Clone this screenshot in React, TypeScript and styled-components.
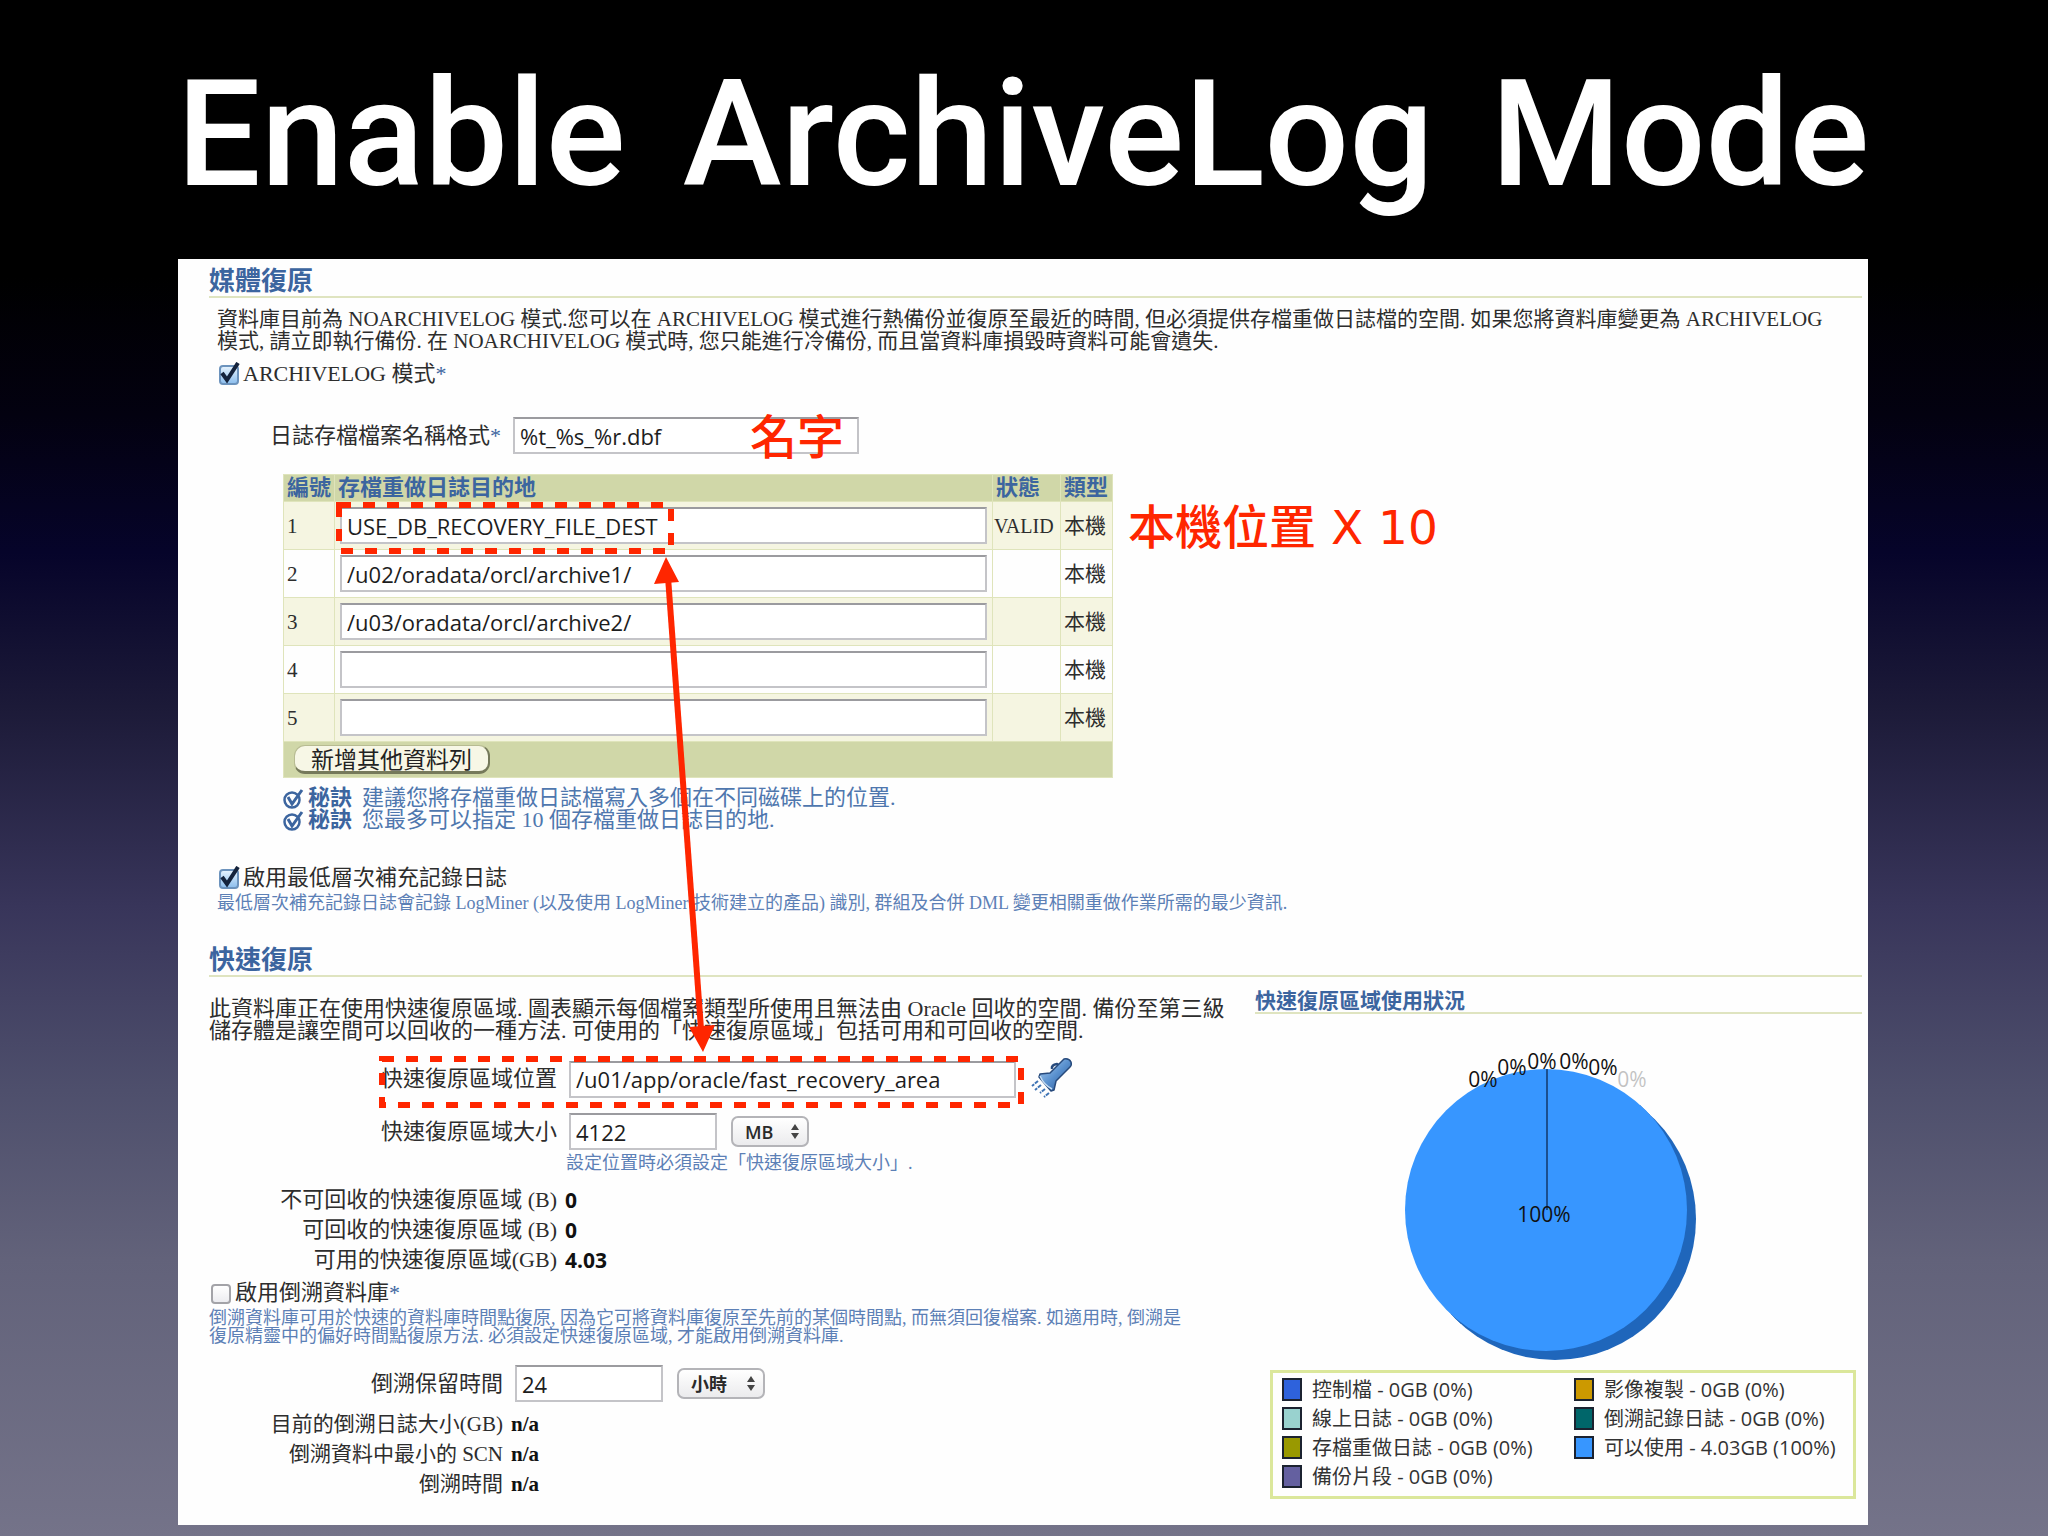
import React from "react";
import styled, { createGlobalStyle } from "styled-components";

const serif = `"Liberation Serif", "Noto Sans CJK TC", serif`;
const sans = `"Open Sans", "Noto Sans CJK TC", sans-serif`;
const display = `Roboto, "Noto Sans CJK TC", sans-serif`;
const red = "#ff2600";
const navy = "#3c659f";
const rule = "#dfe4c0";

const GlobalStyle = createGlobalStyle`
  *, *::before, *::after { box-sizing: border-box; }
  body { margin: 0; background: #000; }
`;

const Slide = styled.main`
  min-height: 100vh;
  padding: 0 180px 10px 178px;
  background: linear-gradient(
    #000 0%, #000 18%, #030110 27%, #06042a 36%, #1c1a38 46%,
    #38355a 59%, #4e4f6c 71%, #62627a 82%, #747389 100%
  );
`;

const Title = styled.h1`
  display: flex;
  justify-content: center;
  gap: 20px;
  margin: 0;
  padding: 44px 0 35px;
  font: 500 149px/180px ${display};
  color: #fff;
  white-space: pre;
`;

const Panel = styled.section`
  position: relative;
  padding: 9px 6px 26px 31px;
  background: #fefefe;
  font: 22px/22px ${serif};
  color: #2d2d2d;
`;

const Heading = styled.h2`
  margin: 0;
  border-bottom: 2px solid ${rule};
  font: bold 26px/28px ${serif};
  color: ${navy};
`;

const Media = styled.div`
  padding: 10px 0 35px 8px;
`;

const Intro = styled.p<{ $size: number }>`
  margin: 0;
  font-size: ${(p) => p.$size}px;
  white-space: nowrap;
`;

const CheckRow = styled.label<{ $top: number }>`
  display: flex;
  align-items: center;
  gap: 3px;
  height: 24px;
  margin-top: ${(p) => p.$top}px;
`;

const CheckBox = styled.span`
  position: relative;
  display: block;
  width: 23px;
  height: 24px;

  input {
    appearance: none;
    display: block;
    width: 20px;
    height: 20px;
    margin: 3px 0 0 2px;
    border: 2px solid #a3a3a8;
    border-radius: 4px;
    background: linear-gradient(#fff, #ececf0);
  }
  input:checked {
    border-color: #6c93bd;
    background: linear-gradient(#e3f1fd, #8fc0ee);
  }
  svg {
    position: absolute;
    inset: 0;
    pointer-events: none;
  }
  input:not(:checked) + svg { display: none; }
`;

const Star = styled.span`
  color: ${navy};
`;

const Field = styled.div<{ $label: number; $top: number }>`
  display: grid;
  grid-template-columns: ${(p) => p.$label}px auto auto;
  justify-content: start;
  align-items: center;
  column-gap: 12px;
  margin-top: ${(p) => p.$top}px;

  label { text-align: right; }
`;

const TextBox = styled.input<{ $width: string }>`
  width: ${(p) => p.$width};
  height: 37px;
  padding: 0 5px;
  border: 2px solid #c4c4c8;
  border-top-color: #9b9b9f;
  border-radius: 0;
  background: #fff;
  font: 22px/30px ${sans};
  color: #1d1d1d;
  outline: none;
`;

const SelectBox = styled.span<{ $width: number }>`
  position: relative;
  display: block;
  width: ${(p) => p.$width}px;
  margin-left: 2px;

  select {
    appearance: none;
    display: block;
    width: 100%;
    height: 31px;
    padding: 0 12px;
    border: 2px solid #b4b4b8;
    border-radius: 7px;
    background: linear-gradient(#fff, #ebebed);
    font: 600 18px/26px ${sans};
    color: #2a2a2a;
  }
  svg {
    position: absolute;
    top: 8px;
    right: 10px;
    pointer-events: none;
  }
`;

const Table = styled.table`
  width: 829px;
  margin: 20px 0 0 66px;
  border-collapse: collapse;
  table-layout: fixed;

  th, td {
    padding: 0 3px;
    border: 1px solid #dfe4bb;
    text-align: left;
    white-space: nowrap;
  }
  thead th, tfoot td {
    background: #d0d7a8;
  }
  thead th {
    height: 27px;
    font-size: 22px;
    color: ${navy};
  }
  tbody td, tbody th {
    height: 48px;
    font-size: 21px;
    font-weight: normal;
  }
  tbody tr:nth-child(odd) { background: #f5f5e1; }
  tbody td:nth-child(2) { padding: 0 5px; }
  tbody td:nth-child(3) { font-size: 20px; padding: 0 1px; }
  tfoot td {
    height: 36px;
    padding: 0 10px;
  }
`;

const AddButton = styled.button`
  display: block;
  height: 29px;
  padding: 0 16px;
  border: 1px solid #b7bb92;
  border-bottom: 3px solid #75795a;
  border-right: 2px solid #75795a;
  border-radius: 11px;
  background: #f7f7e6;
  font: 23px/24px ${sans};
  color: #222;
`;

const Tips = styled.ul`
  margin: 9px 0 0 66px;
  padding: 0;
  list-style: none;
  color: #4f77ae;

  li {
    display: flex;
    align-items: center;
    gap: 4px;
  }
  strong {
    margin-right: 6px;
    color: ${navy};
  }
`;

const Hint = styled.p<{ $top: number; $left?: number }>`
  margin: ${(p) => p.$top}px 0 0 ${(p) => p.$left ?? 0}px;
  font-size: 18px;
  line-height: 18px;
  color: #5c80b6;
  white-space: nowrap;
`;

const Columns = styled.div`
  display: grid;
  grid-template-columns: minmax(0, 1fr) 607px;
  column-gap: 47px;
`;

const Recovery = styled.div`
  padding-top: 21px;
`;

const Facts = styled.dl<{ $label: number; $top: number; $size: number; $font: string }>`
  display: grid;
  grid-template-columns: ${(p) => p.$label}px 1fr;
  column-gap: 8px;
  margin: ${(p) => p.$top}px 0 0;
  font-size: ${(p) => p.$size}px;
  line-height: 30px;

  dt { text-align: right; }
  dd {
    margin: 0;
    font-family: ${(p) => p.$font};
    font-weight: bold;
    font-size: 21px;
    color: #111;
  }
`;

const Torch = styled.button`
  display: block;
  padding: 0 0 0 3px;
  border: 0;
  background: none;
`;

const Usage = styled.div`
  padding-top: 13px;
`;

const UsageHeading = styled.h3`
  margin: 0;
  border-bottom: 2px solid ${rule};
  font: bold 21px/22px ${serif};
  color: ${navy};
`;

const Pie = styled.svg`
  display: block;
  width: 100%;
  height: 356px;

  text {
    font: 21px ${sans};
    text-anchor: middle;
    fill: #111;
  }
`;

const Legend = styled.ul`
  display: grid;
  grid-template-columns: 292px 1fr;
  grid-template-rows: repeat(4, 29px);
  grid-auto-flow: column;
  margin: 0 6px 0 15px;
  padding: 2px 0 5px 9px;
  border: 3px solid #dbe79b;
  list-style: none;
  font: 20px/29px ${sans};
  color: #333;
  white-space: nowrap;

  li {
    display: flex;
    align-items: center;
    gap: 10px;
  }
`;

const Swatch = styled.span<{ $color: string }>`
  width: 20px;
  height: 23px;
  border: 2px solid #1b2230;
  background: ${(p) => p.$color};
`;

const Note = styled.p<{ $x: number; $y: number }>`
  position: absolute;
  left: ${(p) => p.$x}px;
  top: ${(p) => p.$y}px;
  margin: 0;
  font: 500 47px/56px "Noto Sans CJK TC", sans-serif;
  color: ${red};
  white-space: nowrap;

  span { font-family: "DejaVu Sans", sans-serif; }
`;

const Marks = styled.svg`
  position: absolute;
  left: 0;
  top: 0;
  pointer-events: none;
`;

function Check({ defaultChecked = false }: { defaultChecked?: boolean }) {
  return (
    <CheckBox>
      <input type="checkbox" defaultChecked={defaultChecked} />
      <svg width="23" height="24" viewBox="0 0 23 24" aria-hidden="true">
        <path d="M5 11 L10 18 L21 1" fill="none" stroke="#14233c" strokeWidth="4" />
      </svg>
    </CheckBox>
  );
}

function UnitSelect({ label, unit, width }: { label: string; unit: string; width: number }) {
  return (
    <SelectBox $width={width}>
      <select aria-label={label} defaultValue={unit}>
        <option>{unit}</option>
      </select>
      <svg width="8" height="15" viewBox="0 0 8 15" aria-hidden="true">
        <path d="M0 6 L4 0 L8 6 Z M0 9 L4 15 L8 9 Z" fill="#444" />
      </svg>
    </SelectBox>
  );
}

function TipIcon() {
  return (
    <svg width="21" height="21" viewBox="0 0 21 21" fill="none" stroke={navy} aria-hidden="true">
      <circle cx="9" cy="12" r="7.5" strokeWidth="2.5" />
      <path d="M5 9 L9 16 L19 2" strokeWidth="3" />
    </svg>
  );
}

function TorchIcon() {
  return (
    <svg width="42" height="41" viewBox="0 0 42 41" aria-hidden="true">
      <defs>
        <linearGradient id="torch" x1="0" y1="0" x2="1" y2="1">
          <stop offset="0" stopColor="#b5d5f4" />
          <stop offset="0.5" stopColor="#5a91cf" />
          <stop offset="1" stopColor="#1f4f8f" />
        </linearGradient>
      </defs>
      <path d="M21 12 Q20 8 26 7 L29 9" fill="none" stroke="#274a7c" strokeWidth="2.5" />
      <path
        d="M33 2 Q38 1 40 5 Q41 8 39 10 L25 24 L23 33 L20 34 L8 20 L9 17 L19 16 Z"
        fill="url(#torch)" stroke="#274a7c" strokeWidth="1.5" strokeLinejoin="round"
      />
      <path d="M9 19 Q13 28 21 32" fill="none" stroke="#c7dff6" strokeWidth="1.5" />
      <path
        d="M7 24 L1 29 M10 28 L4 33 M14 32 L9 36 M18 36 L13 40"
        stroke="#3f74b5" strokeWidth="2" strokeDasharray="4 1"
      />
    </svg>
  );
}

const destinations = [
  { path: "USE_DB_RECOVERY_FILE_DEST", status: "VALID" },
  { path: "/u02/oradata/orcl/archive1/", status: "" },
  { path: "/u03/oradata/orcl/archive2/", status: "" },
  { path: "", status: "" },
  { path: "", status: "" },
];

const legend = [
  ["#2e62dc", "控制檔 - 0GB (0%)"],
  ["#99d2cf", "線上日誌 - 0GB (0%)"],
  ["#999900", "存檔重做日誌 - 0GB (0%)"],
  ["#6460a0", "備份片段 - 0GB (0%)"],
  ["#cc9900", "影像複製 - 0GB (0%)"],
  ["#00666a", "倒溯記錄日誌 - 0GB (0%)"],
  ["#3796ff", "可以使用 - 4.03GB (100%)"],
];

const zeroLabels = [
  [228, 73], [257, 61], [287, 55], [319, 55], [348, 61],
];

export default function App() {
  return (
    <Slide>
      <GlobalStyle />
      <Title>
        <span>Enable </span>
        <span>ArchiveLog </span>
        <span>Mode</span>
      </Title>
      <Panel>
        <Heading>媒體復原</Heading>
        <Media>
          <Intro $size={21}>
            資料庫目前為 NOARCHIVELOG 模式.您可以在 ARCHIVELOG 模式進行熱備份並復原至最近的時間, 但必須提供存檔重做日誌檔的空間. 如果您將資料庫變更為 ARCHIVELOG
            <br />
            模式, 請立即執行備份. 在 NOARCHIVELOG 模式時, 您只能進行冷備份, 而且當資料庫損毀時資料可能會遺失.
          </Intro>
          <CheckRow $top={10}>
            <Check defaultChecked />
            <span>ARCHIVELOG 模式<Star>*</Star></span>
          </CheckRow>
          <Field $label={284} $top={31}>
            <label htmlFor="format">日誌存檔檔案名稱格式<Star>*</Star></label>
            <TextBox id="format" $width="346px" defaultValue="%t_%s_%r.dbf" />
          </Field>
          <Table>
            <colgroup>
              <col width="51" />
              <col width="658" />
              <col width="68" />
              <col width="52" />
            </colgroup>
            <thead>
              <tr>
                <th>編號</th>
                <th>存檔重做日誌目的地</th>
                <th>狀態</th>
                <th>類型</th>
              </tr>
            </thead>
            <tbody>
              {destinations.map((row, i) => (
                <tr key={i}>
                  <th scope="row">{i + 1}</th>
                  <td>
                    <TextBox $width="100%" defaultValue={row.path} aria-label={`存檔重做日誌目的地 ${i + 1}`} />
                  </td>
                  <td>{row.status}</td>
                  <td>本機</td>
                </tr>
              ))}
            </tbody>
            <tfoot>
              <tr>
                <td colSpan={4}><AddButton type="button">新增其他資料列</AddButton></td>
              </tr>
            </tfoot>
          </Table>
          <Tips>
            <li><TipIcon /><strong>秘訣</strong>建議您將存檔重做日誌檔寫入多個在不同磁碟上的位置.</li>
            <li><TipIcon /><strong>秘訣</strong>您最多可以指定 10 個存檔重做日誌目的地.</li>
          </Tips>
          <CheckRow $top={35}>
            <Check defaultChecked />
            <span>啟用最低層次補充記錄日誌</span>
          </CheckRow>
          <Hint $top={4}>
            最低層次補充記錄日誌會記錄 LogMiner (以及使用 LogMiner 技術建立的產品) 識別, 群組及合併 DML 變更相關重做作業所需的最少資訊.
          </Hint>
        </Media>
        <Heading>快速復原</Heading>
        <Columns>
          <Recovery>
            <Intro $size={22}>
              此資料庫正在使用快速復原區域. 圖表顯示每個檔案類型所使用且無法由 Oracle 回收的空間. 備份至第三級
              <br />
              儲存體是讓空間可以回收的一種方法. 可使用的「快速復原區域」包括可用和可回收的空間.
            </Intro>
            <Field $label={348} $top={15}>
              <label htmlFor="location">快速復原區域位置</label>
              <TextBox id="location" $width="447px" defaultValue="/u01/app/oracle/fast_recovery_area" />
              <Torch type="button" aria-label="快速復原區域位置"><TorchIcon /></Torch>
            </Field>
            <Field $label={348} $top={12}>
              <label htmlFor="size">快速復原區域大小</label>
              <TextBox id="size" $width="148px" defaultValue="4122" />
              <UnitSelect label="快速復原區域大小" unit="MB" width={78} />
            </Field>
            <Hint $top={4} $left={357}>設定位置時必須設定「快速復原區域大小」.</Hint>
            <Facts $label={348} $top={13} $size={22} $font={sans}>
              <dt>不可回收的快速復原區域 (B)</dt><dd>0</dd>
              <dt>可回收的快速復原區域 (B)</dt><dd>0</dd>
              <dt>可用的快速復原區域(GB)</dt><dd>4.03</dd>
            </Facts>
            <CheckRow $top={6}>
              <Check />
              <span>啟用倒溯資料庫<Star>*</Star></span>
            </CheckRow>
            <Hint $top={4}>
              倒溯資料庫可用於快速的資料庫時間點復原, 因為它可將資料庫復原至先前的某個時間點, 而無須回復檔案. 如適用時, 倒溯是
              <br />
              復原精靈中的偏好時間點復原方法. 必須設定快速復原區域, 才能啟用倒溯資料庫.
            </Hint>
            <Field $label={294} $top={20}>
              <label htmlFor="retention">倒溯保留時間</label>
              <TextBox id="retention" $width="148px" defaultValue="24" />
              <UnitSelect label="倒溯保留時間" unit="小時" width={88} />
            </Field>
            <Facts $label={294} $top={7} $size={21} $font={serif}>
              <dt>目前的倒溯日誌大小(GB)</dt><dd>n/a</dd>
              <dt>倒溯資料中最小的 SCN</dt><dd>n/a</dd>
              <dt>倒溯時間</dt><dd>n/a</dd>
            </Facts>
          </Recovery>
          <Usage>
            <UsageHeading>快速復原區域使用狀況</UsageHeading>
            <Pie viewBox="0 0 607 356" role="img" aria-label="快速復原區域使用狀況">
              <circle cx="300" cy="205" r="141" fill="#1f66bb" />
              <path d="M385 91 L395 101 L206 310 L196 300 Z" fill="#1f66bb" />
              <circle cx="291" cy="196" r="141" fill="#3796ff" />
              <path d="M292 55 V196" stroke="#1b4f8f" strokeWidth="2" />
              {zeroLabels.map(([x, y]) => (
                <text key={x} x={x} y={y}>0%</text>
              ))}
              <text x="377" y="73" opacity="0.25">0%</text>
              <text x="289" y="208">100%</text>
            </Pie>
            <Legend>
              {legend.map(([color, text]) => (
                <li key={text}><Swatch $color={color} />{text}</li>
              ))}
            </Legend>
          </Usage>
        </Columns>
        <Note $x={572} $y={147}>名字</Note>
        <Note $x={950} $y={237}>本機位置<span> X 10</span></Note>
        <Marks width="1200" height="900" viewBox="0 0 1200 900" aria-hidden="true">
          <g fill="none" stroke={red} strokeWidth="6" strokeDasharray="12 12">
            <rect x="161" y="246" width="332" height="46" />
            <rect x="204" y="800" width="639" height="46" />
          </g>
          <path d="M490 318 L523 770" stroke={red} strokeWidth="6" />
          <path d="M488 298 L501 323 L476 325 Z M525 793 L511 768 L537 766 Z" fill={red} />
        </Marks>
      </Panel>
    </Slide>
  );
}
